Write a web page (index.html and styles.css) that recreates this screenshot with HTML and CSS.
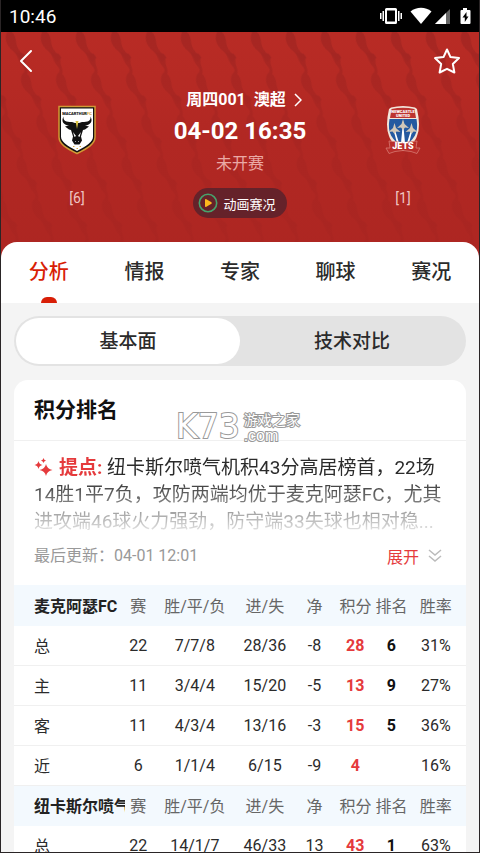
FILE: index.html
```html
<!DOCTYPE html>
<html lang="zh-CN">
<head>
    <meta charset="UTF-8">
    <meta name="viewport" content="width=device-width, initial-scale=1.0">
    <title>周四001 澳超</title>
    <link rel="stylesheet" href="styles.css">
</head>
<body>
    <div class="app">
        <div class="status-bar">
            <span class="clock">10:46</span>
            <svg class="status-icons" viewBox="0 0 92 18" width="92" height="18" fill="#fff">
                <path d="M7.500 1h9a1.500 1.500 0 0 1 1.500 1.500v13a1.500 1.500 0 0 1-1.500 1.500h-9a1.500 1.500 0 0 1-1.500-1.500v-13a1.500 1.500 0 0 1 1.500-1.500zM8 3.500v11h8V3.500zM3.500 4h1.500v10H3.500zM19 4h1.500v10h-1.500zM1 6h1.500v6H1zM21.500 6h1.500v6H21.500z" fill-rule="evenodd"/>
                <path d="M31.500 4.500C37.500-0.500 46.500-0.500 52.500 4.500L42 17z"/>
                <path d="M56 17L71 2v15z" fill="#666"/>
                <path d="M56 17L67 6v11z"/>
                <path d="M84 1h4v2h2.500a1 1 0 0 1 1 1v12a1 1 0 0 1-1 1h-8a1 1 0 0 1-1-1V4a1 1 0 0 1 1-1H84zM87.500 5l-4 5.500h2.300V15l3.700-5.500h-2z" fill-rule="evenodd"/>
            </svg>
        </div>

        <header class="hero">
            <svg class="hero-pattern" width="100%" height="100%" aria-hidden="true">
                <defs>
                    <pattern id="waves" width="35" height="42" patternUnits="userSpaceOnUse" patternTransform="skewX(20)">
                        <path d="M6 0C1 6 0 13 5 19C9 24 6 29 9 34C11 38 9 40 6 42H11C14 38 12 34 14 29C17 24 11 21 11 15C11 9 14 5 11 0z" fill="#a42622"/>
                        <path d="M7 20l8 2 1 4-6 4z" fill="#9f2522"/>
                    </pattern>
                    <linearGradient id="fade" x1="0" y1="0" x2="0" y2="1">
                        <stop offset="0" stop-color="#b32823" stop-opacity="0.150"/>
                        <stop offset="0.450" stop-color="#ae2622" stop-opacity="0.700"/>
                        <stop offset="1" stop-color="#ab2521" stop-opacity="0.850"/>
                    </linearGradient>
                </defs>
                <rect width="100%" height="100%" fill="url(#waves)"/>
                <rect width="100%" height="100%" fill="url(#fade)"/>
            </svg>

            <div class="hero-nav">
                <button class="icon-btn" aria-label="返回">
                    <svg viewBox="0 0 14 24" width="14" height="24" fill="none" stroke="#fff" stroke-width="2" stroke-linecap="round" stroke-linejoin="round"><path d="M12 2L2 12l10 10"/></svg>
                </button>
                <button class="icon-btn" aria-label="收藏">
                    <svg viewBox="0 0 28 28" width="28" height="28" fill="none" stroke="#fff" stroke-width="2" stroke-linejoin="round"><path d="M14 2.500l3.500 7.600 8.500 1-6.200 5.800 1.600 8.600L14 21.800l-7.400 3.700 1.600-8.600L2 11.100l8.500-1z"/></svg>
                </button>
            </div>

            <div class="match">
                <div class="team">
                    <svg class="crest" viewBox="0 0 40 50" width="40" height="50">
                        <path d="M2 1.500H38V32C38 39 31 43 20 48.500C9 43 2 39 2 32z" fill="#111" stroke="#d19a35" stroke-width="1.500"/>
                        <path d="M4 3.500H36V31.500C36 37 30 40.500 20 46C10 40.500 4 37 4 31.500z" fill="#fff"/>
                        <text x="20" y="10" text-anchor="middle" class="crest-name">MACARTHUR<tspan fill="#d9a83e">FC</tspan></text>
                        <path d="M6.500 11.500C6 16 9 17 15 17l3 1h4l3-1C31 17 34 16 33.500 11.500C36 16 34 20 28 20.500L32 21.500 28 24.500 26 25 24 31.500 25 35.500 22.500 39.500H17.500L15 35.500 16 31.500 14 25 12 24.500 8 21.500 12 20.500C6 20 4 16 6.500 11.500z" fill="#111"/>
                        <path d="M18.500 16h3L20 24z" fill="#d9c23e"/>
                        <path d="M17.500 32l-1.500-5 3 4zM22.500 32l1.500-5-3 4z" fill="#fff"/>
                        <path d="M18 36.500h1M21 36.500h1" stroke="#999"/>
                        <path d="M16 41.500h1.500M19.500 43.500h1.500M22.500 41.500h1.500" stroke="#d9a83e"/>
                    </svg>
                    <span class="rank">[6]</span>
                </div>
                <div class="match-info">
                    <a class="league" href="#">
                        <span>周四001</span>
                        <span>澳超</span>
                        <svg viewBox="0 0 8 14" width="8" height="14" fill="none" stroke="#fff" stroke-width="1.500"><path d="M1 1l6 6-6 6"/></svg>
                    </a>
                    <div class="kickoff">04-02 16:35</div>
                    <div class="match-state">未开赛</div>
                    <button class="live-btn">
                        <svg viewBox="0 0 20 20" width="20" height="20"><circle cx="10" cy="10" r="8.700" fill="none" stroke="#47a36d" stroke-width="1.600"/><path d="M7 7q0-1.500 1.400-.8l5 3q1 .8 0 1.600l-5 3Q7 14.500 7 13z" fill="#fdb91c"/></svg>
                        动画赛况
                    </button>
                </div>
                <div class="team">
                    <svg class="crest" viewBox="0 0 40 50" width="40" height="50">
                        <path d="M8 2.500Q20-0.500 32 2.500L34 4Q38 21 34 31C32 37 27 41 20 46C13 41 8 37 6 31Q2 21 6 4z" fill="#f3e7dc"/>
                        <path d="M8.500 4Q20 1.500 31.500 4L33 13H7z" fill="#bd3430"/>
                        <path d="M6.500 14H33.500C36 28 31 35 20 42C9 35 4 28 6.500 14z" fill="#2459a0"/>
                        <text x="20" y="8" text-anchor="middle" class="crest-tiny">NEWCASTLE</text>
                        <text x="20" y="12" text-anchor="middle" class="crest-tiny">UNITED</text>
                        <path d="M19.500 22h1L22 38h-4zM10.500 25h1.500L16 38h-2zM28 25h1.500L26 38h-2z" fill="#fff"/>
                        <path id="jet" d="M20 14l1.500 5 4.500 4-4-.5-2 2.500-2-2.500-4 .5 4.500-4z" fill="#d2c7b8"/>
                        <use href="#jet" x="-8.500" y="4"/>
                        <use href="#jet" x="8.500" y="4"/>
                        <path d="M6 36Q20 39 34 36L33 43 37 43 34 48.500 28 46.500Q20 44.500 12 46.500L6 48.500 3 43 7 43z" fill="#b92d2a" stroke="#d77a71" stroke-width=".8"/>
                        <text x="20" y="44" text-anchor="middle" class="crest-jets">JETS</text>
                    </svg>
                    <span class="rank">[1]</span>
                </div>
            </div>
        </header>

        <main class="sheet">
            <nav class="tabs">
                <a class="tab active" href="#">分析</a>
                <a class="tab" href="#">情报</a>
                <a class="tab" href="#">专家</a>
                <a class="tab" href="#">聊球</a>
                <a class="tab" href="#">赛况</a>
            </nav>

            <div class="segment">
                <button class="segment-btn selected">基本面</button>
                <button class="segment-btn">技术对比</button>
            </div>

            <section class="card">
                <h2 class="card-title">积分排名</h2>
                <div class="watermark" aria-hidden="true">
                    <span class="wm-logo">K73</span>
                    <span class="wm-side"><span class="wm-name">游戏之家</span><span class="wm-com">.com</span></span>
                </div>

                <div class="tip">
                    <p class="tip-text"><svg class="spark" viewBox="0 0 19 18" width="19" height="18" fill="#e53a3c"><path d="M12 6q1 5 6.500 6-5.500 1-6.500 6-1-5-6.500-6 5.500-1 6.500-6zM4.500 3q.7 3.300 4 4-3.300.7-4 4-.7-3.300-4-4 3.300-.7 4-4zM9.500 0q.4 2 2.500 2.500-2.100.5-2.500 2.500-.4-2-2.500-2.500 2.100-.5 2.500-2.500z"/></svg><b class="tip-label">提点:</b> 纽卡斯尔喷气机积43分高居榜首，22场14胜1平7负，攻防两端均优于麦克阿瑟FC，尤其进攻端46球火力强劲，防守端33失球也相对稳...</p>
                    <div class="tip-foot">
                        <span>最后更新：04-01 12:01</span>
                        <button class="expand">展开
                            <svg viewBox="0 0 14 14" width="14" height="14" fill="none" stroke="#bbb" stroke-width="1.500"><path d="M1 1l6 5 6-5M1 7l6 5 6-5"/></svg>
                        </button>
                    </div>
                </div>

                <table class="standings">
                    <colgroup>
                        <col class="c-name"><col class="c-played"><col class="c-record"><col class="c-goals">
                        <col class="c-diff"><col class="c-points"><col class="c-rank"><col class="c-rate">
                    </colgroup>
                    <tbody>
                        <tr class="head"><th><span class="team-name">麦克阿瑟FC</span></th><th>赛</th><th>胜/平/负</th><th>进/失</th><th>净</th><th>积分</th><th>排名</th><th>胜率</th></tr>
                        <tr><td>总</td><td>22</td><td>7/7/8</td><td>28/36</td><td>-8</td><td class="points">28</td><td class="place">6</td><td>31%</td></tr>
                        <tr><td>主</td><td>11</td><td>3/4/4</td><td>15/20</td><td>-5</td><td class="points">13</td><td class="place">9</td><td>27%</td></tr>
                        <tr><td>客</td><td>11</td><td>4/3/4</td><td>13/16</td><td>-3</td><td class="points">15</td><td class="place">5</td><td>36%</td></tr>
                        <tr><td>近</td><td>6</td><td>1/1/4</td><td>6/15</td><td>-9</td><td class="points">4</td><td class="place"></td><td>16%</td></tr>
                    </tbody>
                    <tbody>
                        <tr class="head"><th><span class="team-name">纽卡斯尔喷气机</span></th><th>赛</th><th>胜/平/负</th><th>进/失</th><th>净</th><th>积分</th><th>排名</th><th>胜率</th></tr>
                        <tr><td>总</td><td>22</td><td>14/1/7</td><td>46/33</td><td>13</td><td class="points">43</td><td class="place">1</td><td>63%</td></tr>
                    </tbody>
                </table>
            </section>
        </main>
    </div>
</body>
</html>
```
FILE: styles.css
```css
* {
    box-sizing: border-box;
}

body {
    margin: 0;
    font-family: Roboto, "Noto Sans CJK SC", sans-serif;
    background-color: #222;
    color: #2b2b2b;
}

button {
    font-family: inherit;
    border: none;
    padding: 0;
    background: none;
    cursor: pointer;
}

a {
    color: inherit;
    text-decoration: none;
}

svg {
    flex-shrink: 0;
}

.app {
    height: 100vh;
    border: 1px solid #2a2526;
    border-top: none;
    background-color: #f4f4f4;
    overflow-y: auto;
    scrollbar-width: none;
}

.status-bar {
    height: 32px;
    padding: 0 8px;
    display: flex;
    align-items: center;
    justify-content: space-between;
    background-color: #000;
    color: #fff;
}

.clock {
    font-size: 19px;
}

/* match header */
.hero {
    position: relative;
    padding-bottom: 40px;
    background-color: #b92c25;
    color: #fff;
}

.hero-pattern {
    position: absolute;
    inset: 0;
}

.hero-nav {
    position: relative;
    height: 56px;
    padding: 2px 18px 0;
    display: flex;
    align-items: center;
    justify-content: space-between;
}

.icon-btn {
    display: flex;
}

.match {
    position: relative;
    display: grid;
    grid-template-columns: 152px 1fr 152px;
}

.team {
    display: flex;
    flex-direction: column;
    align-items: center;
    padding-top: 17px;
    gap: 34px;
}

.rank {
    font-size: 14px;
    line-height: 18px;
    color: #efc4c1;
}

.crest-name {
    font: 900 4px Roboto, sans-serif;
    fill: #111;
}

.crest-tiny {
    font: 900 4px Roboto, sans-serif;
    fill: #fff;
}

.crest-jets {
    font: 900 9px Roboto, sans-serif;
    fill: #fff;
}

.match-info {
    display: flex;
    flex-direction: column;
    align-items: center;
}

.league {
    display: flex;
    align-items: center;
    gap: 8px;
    padding-left: 8px;
    font-size: 16px;
    line-height: 24px;
    font-weight: bold;
}

.kickoff {
    font-size: 24px;
    line-height: 38px;
    font-weight: bold;
}

.match-state {
    font-size: 16px;
    line-height: 28px;
    color: #eaa9a5;
}

.live-btn {
    display: flex;
    align-items: center;
    gap: 5px;
    height: 30px;
    margin-top: 10px;
    padding: 0 11px 0 5px;
    border-radius: 15px;
    background-color: #65222a;
    color: #fff;
    font-size: 13px;
}

/* white sheet over the header */
.sheet {
    position: relative;
    margin-top: -16px;
}

.tabs {
    display: grid;
    grid-template-columns: repeat(5, 1fr);
    border-radius: 16px 16px 0 0;
    background-color: #fff;
}

.tab {
    display: flex;
    flex-direction: column;
    align-items: center;
    height: 61px;
    padding-top: 15px;
    font-size: 20px;
    line-height: 30px;
    font-weight: 500;
}

.tab.active {
    color: #d81e06;
}

.tab.active::after {
    content: "";
    width: 16px;
    height: 6px;
    margin-top: auto;
    border-radius: 6px 6px 0 0;
    background-color: #d81e06;
}

.segment {
    display: grid;
    grid-template-columns: 1fr 1fr;
    height: 50px;
    margin: 13px 13px 14px;
    padding: 2px;
    border-radius: 25px;
    background-color: #e3e3e3;
}

.segment-btn {
    padding-bottom: 4px;
    border-radius: 23px;
    font-size: 19px;
    font-weight: 500;
    color: #2b2b2b;
}

.segment-btn.selected {
    background-color: #fff;
}

.card {
    position: relative;
    margin: 0 13px;
    border-radius: 14px 14px 0 0;
    background-color: #fff;
}

.card-title {
    margin: 0;
    padding: 0 20px;
    border-bottom: 1px solid #f0f0f0;
    font-size: 21px;
    line-height: 60px;
    color: #111;
}

.watermark {
    position: absolute;
    top: 31px;
    left: 162px;
    display: flex;
    align-items: center;
    gap: 4px;
    color: #fff;
    -webkit-text-stroke: 2px #999;
    paint-order: stroke fill;
    pointer-events: none;
}

.wm-logo {
    font-family: "DejaVu Sans", sans-serif;
    font-size: 33px;
    line-height: 32px;
}

.wm-side {
    display: flex;
    flex-direction: column;
}

.wm-name {
    font-size: 14px;
    line-height: 17px;
}

.wm-com {
    font-family: "Liberation Sans", sans-serif;
    font-size: 16px;
    line-height: 14px;
}

.tip {
    padding: 13px 20px 15px;
}

.tip-text {
    margin: 0;
    font-size: 19px;
    line-height: 27px;
    -webkit-mask-image: linear-gradient(#000 30%, transparent 105%);
    mask-image: linear-gradient(#000 30%, transparent 105%);
}

.spark {
    margin-right: 6px;
    vertical-align: -2px;
}

.tip-label {
    color: #e53a3c;
}

.tip-foot {
    display: flex;
    align-items: center;
    justify-content: space-between;
    padding-right: 4px;
    margin-top: 7px;
    font-size: 16px;
    line-height: 28px;
    color: #999;
}

.expand {
    display: flex;
    align-items: center;
    gap: 9px;
    font-size: 16px;
    color: #e53a3c;
}

/* standings */
.standings {
    width: 100%;
    table-layout: fixed;
    border-collapse: collapse;
    font-size: 16px;
}

.c-name { width: 25%; }
.c-played { width: 5%; }
.c-record { width: 20%; }
.c-goals { width: 11%; }
.c-diff { width: 11%; }
.c-points { width: 7%; }
.c-rank { width: 9%; }
.c-rate { width: 12%; }

.standings th,
.standings td {
    height: 40px;
    padding: 0;
    text-align: center;
    white-space: nowrap;
    border-bottom: 1px solid #f0f0f0;
}

.standings th:first-child,
.standings td:first-child {
    padding-left: 20px;
    padding-right: 2px;
    text-align: left;
}

.standings th:last-child,
.standings td:last-child {
    padding-right: 6px;
}

.standings .head {
    background-color: #f3f9fe;
}

.standings .head th {
    font-weight: normal;
    color: #666;
    border-bottom-color: #f3f9fe;
}

.standings .team-name {
    display: block;
    overflow: hidden;
    font-weight: bold;
    color: #222;
}

.standings .points {
    font-weight: bold;
    color: #e53a3c;
}

.standings .place {
    font-weight: bold;
    color: #111;
}
```
